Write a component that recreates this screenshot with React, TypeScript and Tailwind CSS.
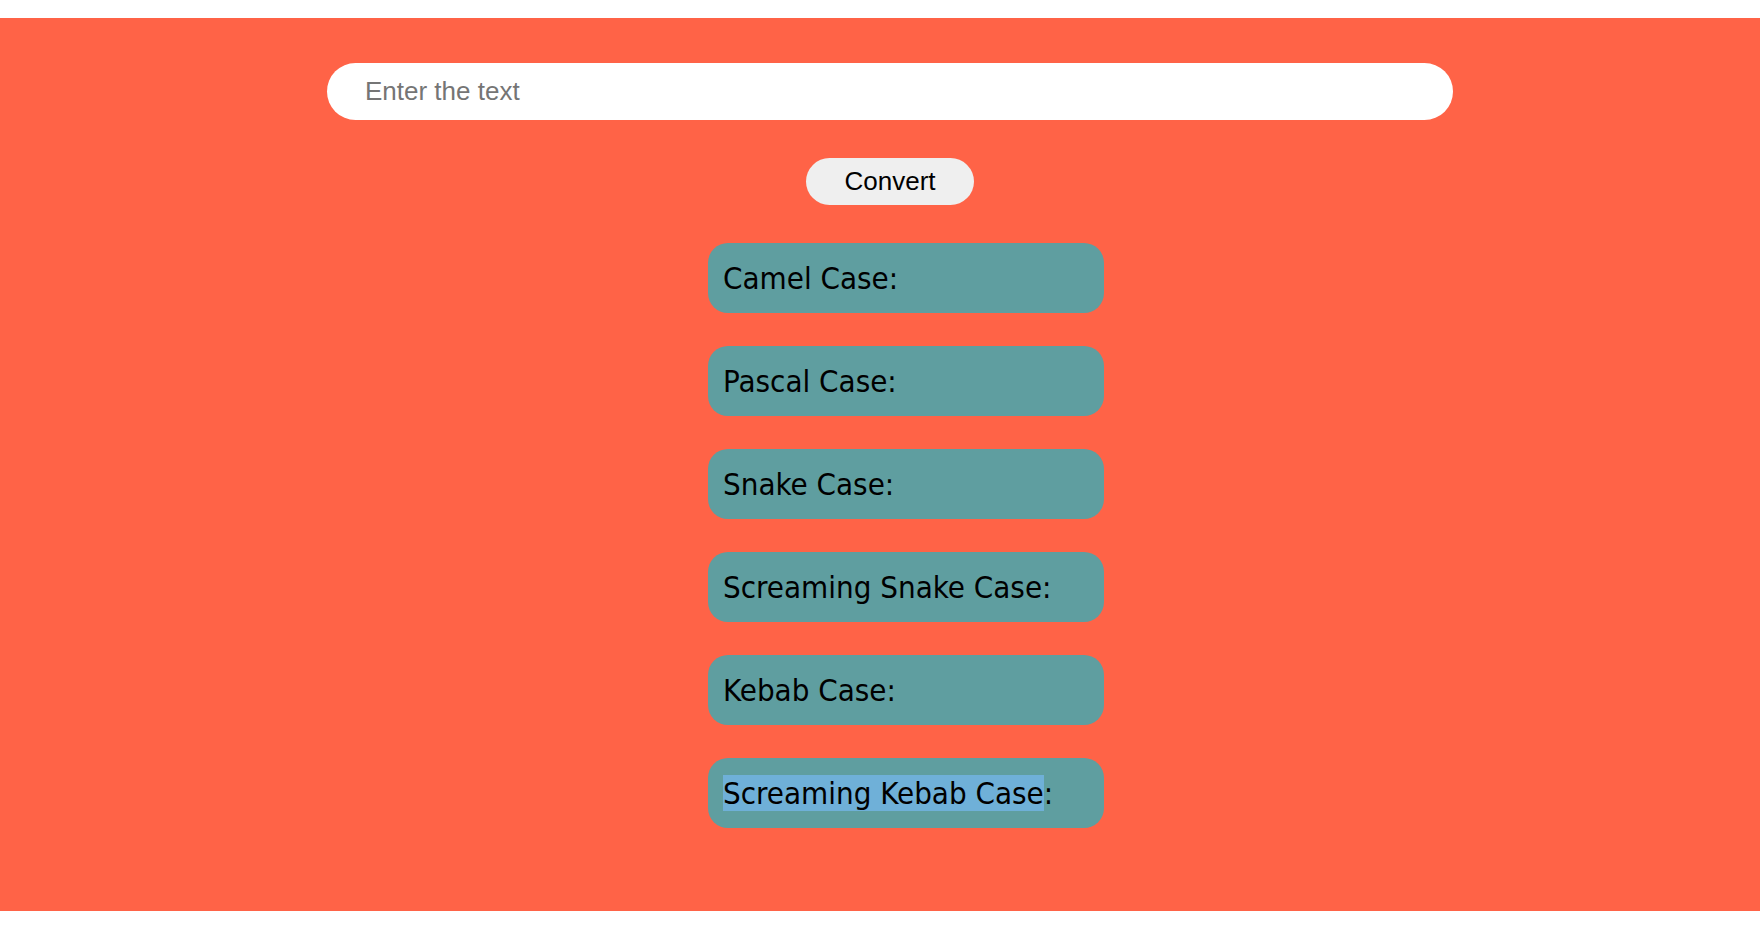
import React, { useState } from 'react';

// Case converter: one text field, a button, and a card per output case
const CASES = [
  'Camel Case',
  'Pascal Case',
  'Snake Case',
  'Screaming Snake Case',
  'Kebab Case',
  'Screaming Kebab Case',
];

function App() {
  const [text, setText] = useState('');

  return (
    <div className="bg-white pt-[18px] pb-[20px]">
      <div className="bg-[#ff6347] pt-[45px] pb-[83px] flex flex-col items-center pl-[20px]">
        <input
          value={text}
          onChange={(e) => setText(e.target.value)}
          placeholder="Enter the text"
          className="w-[1126px] h-[57px] bg-white rounded-full px-[38px] text-[26px] text-black placeholder:text-[#757575] outline-none font-['Liberation_Sans',Arial,sans-serif]"
        />

        <button className="mt-[38px] w-[168px] h-[47px] bg-[#efefef] rounded-full text-[26px] text-black font-['Liberation_Sans',Arial,sans-serif]">
          Convert
        </button>

        <div className="mt-[38px] ml-[32px] flex flex-col gap-[33px] w-[396px]">
          {CASES.map((name, i) => (
            <div
              key={name}
              className="bg-[#5f9ea0] rounded-[20px] h-[70px] px-[15px] flex items-center text-[31px] text-black font-['DejaVu_Sans_Condensed','DejaVu_Sans',sans-serif] whitespace-nowrap"
            >
              {i === CASES.length - 1 ? (
                <span>
                  <span className="bg-[#6fb0d8]">{name}</span>:
                </span>
              ) : (
                <span>{name}:</span>
              )}
            </div>
          ))}
        </div>
      </div>
    </div>
  );
}

export default App;
